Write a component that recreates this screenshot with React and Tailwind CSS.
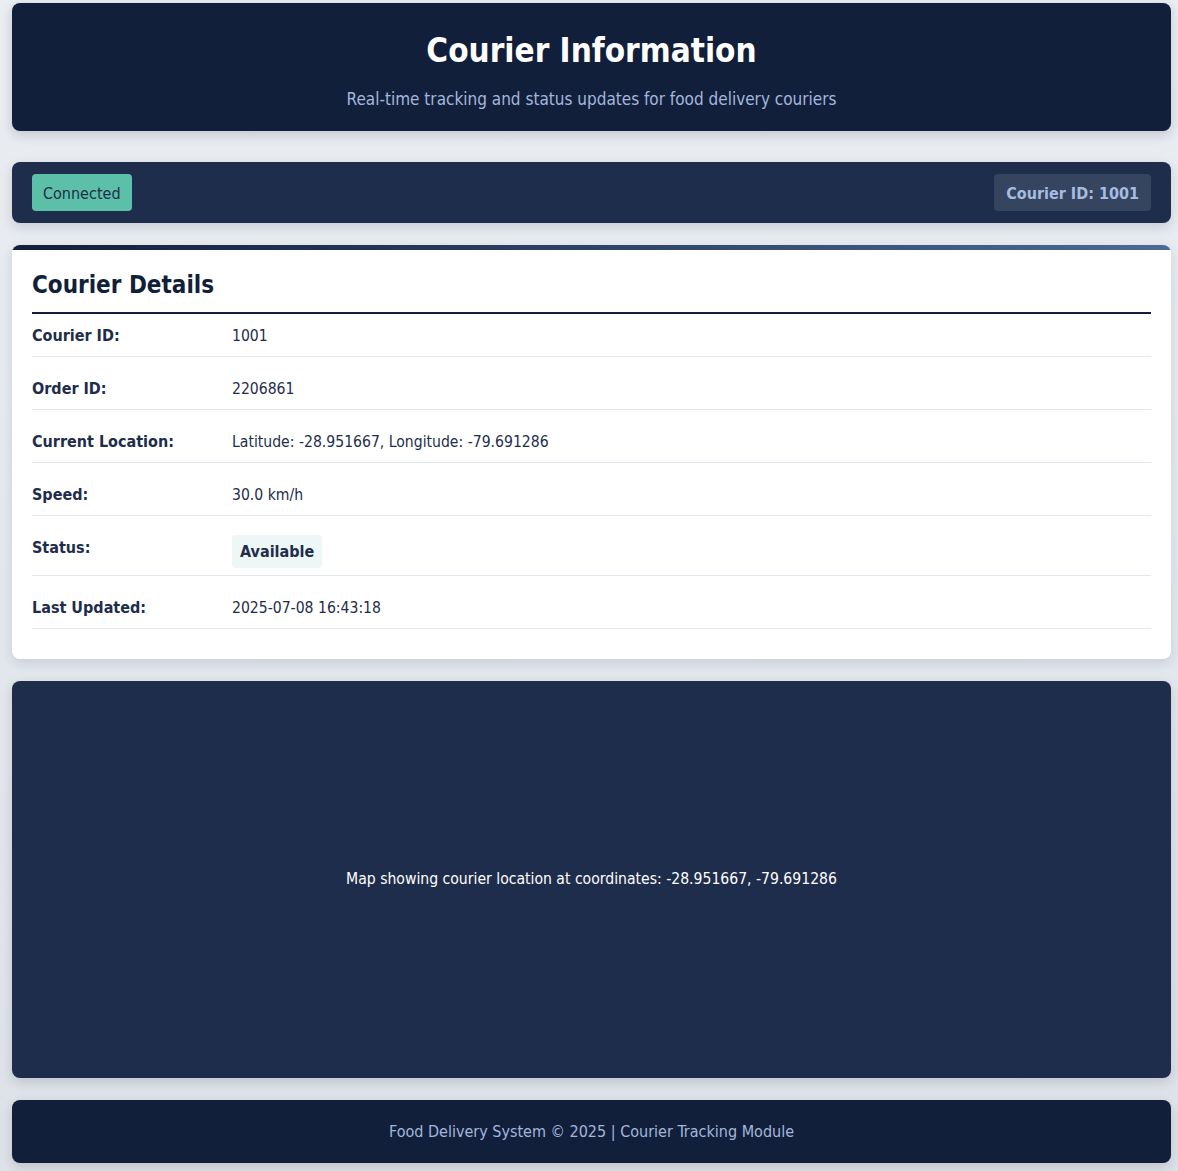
import React from "react";

const FONT = { fontFamily: '"DejaVu Sans Condensed", "DejaVu Sans", sans-serif' };

const rows = [
  { label: "Courier ID:", value: "1001" },
  { label: "Order ID:", value: "2206861" },
  { label: "Current Location:", value: "Latitude: -28.951667, Longitude: -79.691286" },
  { label: "Speed:", value: "30.0 km/h" },
  { label: "Status:", badge: "Available" },
  { label: "Last Updated:", value: "2025-07-08 16:43:18" },
];

function DetailRow({ label, value, badge }) {
  return (
    <div className="mb-[10px] flex items-start border-b border-[#e2e8f0] pt-[13px] pb-[11px] text-[16px] leading-[18px] text-[#1e2d4b]">
      <div className="w-[200px] shrink-0 font-bold">{label}</div>
      {badge ? (
        <div className="-my-[4px] flex h-[33px] items-center rounded-[4px] bg-[#eef7f5] px-[8px] font-bold">{badge}</div>
      ) : (
        <div className="text-[15.6px]">{value}</div>
      )}
    </div>
  );
}

export default function App() {
  return (
    <div style={FONT} className="min-h-[1171px] bg-gradient-to-b from-[#eaeef3] to-[#dde2e8] pt-[3px] pb-[8px]">
      <div className="ml-[12px] w-[1159px]">
        <header className="rounded-lg bg-[#121f3b] pt-[28px] pb-[20px] text-center shadow-[0_4px_12px_rgba(15,23,42,0.18)]">
          <h1 className="text-[33px] font-bold leading-[39px] text-white">Courier Information</h1>
          <p className="mt-[17px] text-[17px] leading-[24px] text-[#a3b7dc]">Real-time tracking and status updates for food delivery couriers</p>
        </header>

        <div className="mt-[31px] flex items-center justify-between rounded-lg bg-[#1f2d4c] px-[20px] py-[12px] shadow-[0_4px_12px_rgba(15,23,42,0.15)]">
          <span className="flex h-[37px] items-center rounded-[4px] bg-[#5cc0a8] px-[11px] pt-[2px] text-[16px] text-[#1e2d4b]">Connected</span>
          <span className="flex h-[37px] items-center rounded-[4px] bg-[#35445f] px-[12px] pt-[2px] text-[16px] font-bold text-[#a6bce0]">Courier ID: 1001</span>
        </div>

        <section className="mt-[22px] overflow-hidden rounded-lg bg-white shadow-[0_4px_12px_rgba(15,23,42,0.12)]">
          <div className="h-[5px] bg-gradient-to-r from-[#121f3b] to-[#4b6a95]" />
          <div className="px-[20px] pt-[20px] pb-[20px]">
            <h2 className="border-b-2 border-[#121f3b] pt-[1px] pb-[12px] text-[24px] font-bold leading-[29px] text-[#121f3b]">Courier Details</h2>
            {rows.map((r) => (
              <DetailRow key={r.label} {...r} />
            ))}
          </div>
        </section>

        <div className="mt-[22px] flex h-[397px] items-center justify-center rounded-lg bg-[#1f2d4c] text-[15.6px] text-white shadow-[0_4px_12px_rgba(15,23,42,0.15)]">
          Map showing courier location at coordinates: -28.951667, -79.691286
        </div>

        <footer className="mt-[22px] flex h-[63px] items-center justify-center rounded-lg bg-[#121f3b] text-[16px] text-[#a3b7dc] shadow-[0_4px_12px_rgba(15,23,42,0.15)]">
          Food Delivery System © 2025 | Courier Tracking Module
        </footer>
      </div>
    </div>
  );
}
